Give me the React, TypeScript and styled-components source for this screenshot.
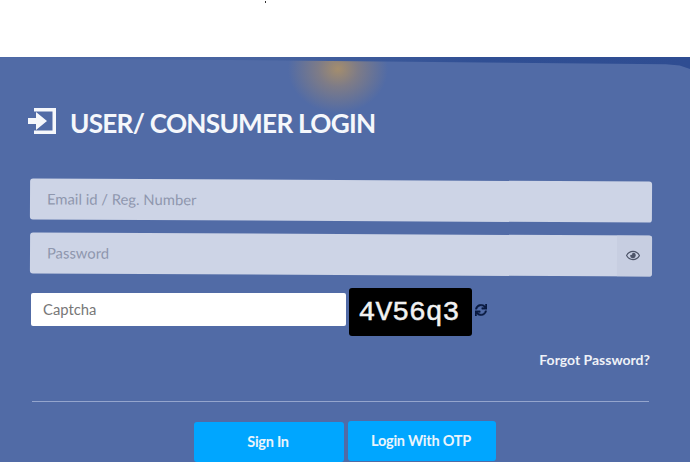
import styled, { createGlobalStyle } from "styled-components";
import { FaRegEye, FaSync } from "react-icons/fa";

const GlobalStyle = createGlobalStyle`
  html, body {
    margin: 0;
    padding: 0;
    background: #fff;
    overflow: hidden;
  }
  * {
    box-sizing: border-box;
  }
`;

const Page = styled.div`
  width: 690px;
  height: 462px;
  overflow: hidden;
  font-family: Lato, "Liberation Sans", sans-serif;
`;

const TopStrip = styled.div`
  position: relative;
  height: 57px;
  background: #fff;
`;

const Speck = styled.span`
  position: absolute;
  left: 265px;
  top: 1px;
  width: 1px;
  height: 2px;
  background: #333;
`;

const Card = styled.main`
  position: relative;
  height: 405px;
  padding: 46px 38px 0 30px;
  overflow: hidden;
  background: #516ba6;
`;

const Glow = styled.div`
  position: absolute;
  left: 288px;
  top: -32px;
  width: 100px;
  height: 88px;
  background: radial-gradient(ellipse 50% 50% at 50% 50%, rgba(185, 150, 95, 0.8) 0%, rgba(170, 140, 105, 0.5) 40%, rgba(81, 107, 166, 0) 100%);
`;

const TopEdge = styled.div`
  position: absolute;
  left: 0;
  top: 0;
  width: 100%;
  height: 12px;
  background: linear-gradient(90deg, #4d69a6 0%, #46629f 40%, #304f94 70%, #2f4d92 100%);
  clip-path: polygon(0 0, 100% 0, 100% 100%, 98.500% 70%, 96.500% 60%, 0 8%);
`;

const Title = styled.h1`
  position: relative;
  display: flex;
  align-items: center;
  gap: 14px;
  height: 44px;
  margin: -2px 0 35px -2px;
  color: #f5f7fb;
  font-size: 26.2px;
  font-weight: 700;
  letter-spacing: -0.75px;
  white-space: nowrap;
  svg {
    flex: none;
    margin-top: -5px;
  }
`;

const Field = styled.div<{ $top: number }>`
  display: flex;
  align-items: center;
  width: 622px;
  height: 41px;
  margin-top: ${(p) => p.$top}px;
  overflow: hidden;
  border-radius: 3px;
  background: #cdd4e6;
  transform: rotate(0.3deg);
`;

const Hint = styled.span`
  flex: 1;
  padding: 0 0 2px 17px;
  color: #8f97ae;
  font-size: 14.8px;
`;

const EyeAddon = styled.span`
  display: flex;
  align-items: center;
  justify-content: center;
  width: 35px;
  height: 100%;
  padding: 0 4px 2px 0;
  background: #c7cee1;
  color: #4d5468;
  font-size: 14px;
`;

const CaptchaRow = styled.div`
  display: flex;
  align-items: flex-start;
  height: 48px;
  margin-top: 13px;
`;

const CaptchaInput = styled.div`
  display: flex;
  align-items: center;
  width: 315px;
  height: 33px;
  margin: 5px 0 0 1px;
  padding: 0 0 2px 12px;
  border-radius: 2px;
  background: #fff;
  color: #777;
  font-size: 14.8px;
`;

const CaptchaImage = styled.div`
  display: flex;
  align-items: center;
  justify-content: center;
  width: 123px;
  height: 48px;
  margin-left: 3px;
  padding-right: 3px;
  border-radius: 3px;
  background: #000;
  color: #f2f2f2;
  font-family: "Liberation Mono", "DejaVu Sans Mono", monospace;
  font-size: 28px;
  -webkit-text-stroke: 0.5px #f2f2f2;
`;

const Refresh = styled.span`
  display: flex;
  margin: 16px 0 0 3px;
  color: #0a1a40;
  font-size: 12px;
  svg {
    stroke: currentColor;
    stroke-width: 15;
  }
`;

const ForgotLink = styled.a`
  display: block;
  margin-top: 15px;
  padding-right: 2px;
  color: #eef1f7;
  font-size: 14px;
  font-weight: 700;
  line-height: 17px;
  text-align: right;
`;

const Divider = styled.hr`
  width: 617px;
  height: 1px;
  margin: 33px 0 0 2px;
  border: 0;
  background: #94a5cd;
`;

const Actions = styled.div`
  display: flex;
  align-items: flex-start;
  gap: 4px;
  margin: 19px 0 0 164px;
`;

const ActionButton = styled.button<{ $width: number; $drop?: number }>`
  width: ${(p) => p.$width}px;
  height: 40px;
  margin-top: ${(p) => p.$drop ?? 0}px;
  padding: 0 2px 2px 0;
  border: 0;
  border-radius: 3px;
  background: #00a6ff;
  color: #eaf4fb;
  font-family: inherit;
  font-size: 14.5px;
  font-weight: 700;
  letter-spacing: -0.25px;
`;

const SignInIcon = () => (
  <svg width="28" height="26" viewBox="0 0 28 26" fill="#f5f7fb">
    <path d="M6 0h22v26H6v-3.500h18.500v-19H6z" />
    <path d="M0 10h8V4L19 13 8 22v-6H0z" />
  </svg>
);

export default function App() {
  return (
    <Page>
      <GlobalStyle />
      <TopStrip>
        <Speck />
      </TopStrip>
      <Card>
        <Glow />
        <TopEdge />
        <Title>
          <SignInIcon />
          USER/ CONSUMER LOGIN
        </Title>
        <Field $top={0}>
          <Hint>Email id / Reg. Number</Hint>
        </Field>
        <Field $top={13}>
          <Hint>Password</Hint>
          <EyeAddon>
            <FaRegEye />
          </EyeAddon>
        </Field>
        <CaptchaRow>
          <CaptchaInput>Captcha</CaptchaInput>
          <CaptchaImage>4V56q3</CaptchaImage>
          <Refresh>
            <FaSync />
          </Refresh>
        </CaptchaRow>
        <ForgotLink>Forgot Password?</ForgotLink>
        <Divider />
        <Actions>
          <ActionButton $width={150} $drop={1}>Sign In</ActionButton>
          <ActionButton $width={148}>Login With OTP</ActionButton>
        </Actions>
      </Card>
    </Page>
  );
}
